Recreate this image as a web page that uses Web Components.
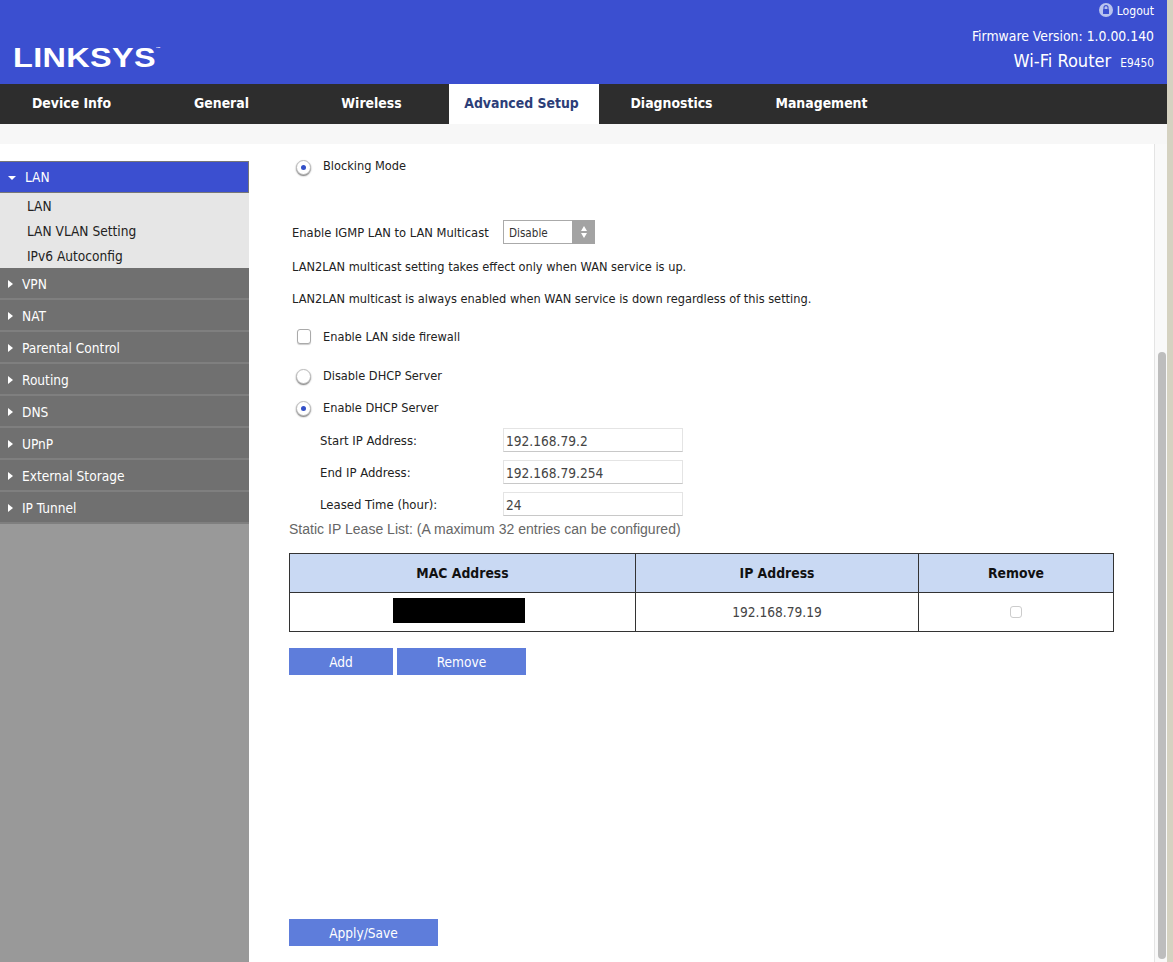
<!DOCTYPE html>
<html><head><meta charset="utf-8"><title>Linksys E9450</title>
<style>
html,body{margin:0;padding:0;height:962px;overflow:hidden;background:#fff}
body{font-family:"DejaVu Sans Condensed","DejaVu Sans",sans-serif;font-stretch:condensed;font-size:12.66px;color:#222}
</style></head><body>
<lx-app>
  <lx-header></lx-header>
  <lx-nav></lx-nav>
  <lx-body>
    <lx-sidebar></lx-sidebar>
    <lx-content></lx-content>
    <lx-scrollbar></lx-scrollbar>
  </lx-body>
</lx-app>
<script>
function def(name, html){
  customElements.define(name, class extends HTMLElement{
    constructor(){super();this.attachShadow({mode:'open'}).innerHTML=typeof html==='function'?html(this):html;}
  });
}
def('lx-app',`<style>:host{display:flex;height:962px}
 .page{width:1167px;display:flex;flex-direction:column;height:962px;overflow:hidden}
 .edge{width:6px;background:#d5d2c1}</style>
 <div class="page"><slot></slot></div><div class="edge"></div>`);

def('lx-header',`<style>:host{display:flex;justify-content:space-between;height:84px;background:#3b4fd0;color:#fff}
 .logo{align-self:flex-start;margin:44px 0 0 13px;font:700 28px/28px "Liberation Sans",sans-serif;letter-spacing:.3px;display:flex;transform:scaleX(1.158);transform-origin:0 0}
 .tm{font-size:2.5px;line-height:8px;letter-spacing:0}
 .r{display:flex;flex-direction:column;align-items:flex-end;padding:0 13px 0 0}
 .logout{height:20px;display:flex;align-items:center;gap:4px;font-size:12.1px}
 .logout span{position:relative;top:1px}
 .fw{margin-top:5px;font-size:13.85px;line-height:22px}
 .wf{margin-top:2px;font-size:18.1px;line-height:24px;display:flex;align-items:baseline;gap:9px}
 .wf small{font-size:11.8px}
 svg{display:block}</style>
 <div class="logo">LINKSYS<span class="tm">TM</span></div>
 <div class="r"><div class="logout"><svg width="14" height="14" viewBox="0 0 14 14"><circle cx="7" cy="7" r="7" fill="#b9c3ee"/><rect x="4" y="6" width="6" height="5" rx=".6" fill="#3b4fd0"/><path d="M5 6V4.6a2 2 0 0 1 4 0V6" fill="none" stroke="#3b4fd0" stroke-width="1.1"/></svg><span>Logout</span></div>
 <div class="fw">Firmware Version: 1.0.00.140</div>
 <div class="wf"><span>Wi-Fi Router</span><small>E9450</small></div></div>`);

def('lx-nav',`<style>:host{display:block;background:#2d2d2d;height:40px;margin-bottom:20px;box-shadow:0 20px 0 #f7f7f7}
 .t{display:flex;height:40px;margin-left:-1px}
 .i{width:150px;box-sizing:border-box;text-align:center;color:#fff;font-weight:700;font-size:13.9px;line-height:38px;flex:none;padding-right:5px}
 .a{background:#fff;color:#2c3e78}</style>
 <div class="t"><div class="i">Device Info</div><div class="i">General</div><div class="i">Wireless</div><div class="i a">Advanced Setup</div><div class="i">Diagnostics</div><div class="i">Management</div></div>`);

def('lx-body',`<style>:host{display:flex;flex:1;min-height:0}</style><slot></slot>`);

def('lx-menu-item',`<style>:host{display:flex;align-items:center;box-sizing:border-box;height:32px;background:#707070;color:#fff;font-size:13.6px;border-bottom:2px solid #7f7f7f;padding:2px 0 0 8px;gap:9px}
 i{width:0;height:0;border-top:4px solid transparent;border-bottom:4px solid transparent;border-left:5px solid #fff}</style><i></i><slot></slot>`);

def('lx-sidebar',`<style>:host{display:block;width:249px;background:#999;flex:none}
 .top{height:17px;background:#fff}
 .h{box-sizing:border-box;height:32px;background:#3b4fd0;color:#fff;font-size:13.6px;display:flex;align-items:center;border:1px solid #777;border-width:1px 1px 1px 0;padding-left:8px;gap:9px}
 .h i{width:0;height:0;border-left:4px solid transparent;border-right:4px solid transparent;border-top:4px solid #fff;margin-top:2px}
 .sub{background:#e6e6e6;height:75px;font-size:13.6px;color:#222}
 .sub div{height:25px;line-height:27px;padding-left:27px}
 </style>
 <div class="top"></div><div class="h"><i></i>LAN</div>
 <div class="sub"><div>LAN</div><div>LAN VLAN Setting</div><div>IPv6 Autoconfig</div></div>
 ${['VPN','NAT','Parental Control','Routing','DNS','UPnP','External Storage','IP Tunnel'].map(t=>`<lx-menu-item>${t}</lx-menu-item>`).join('')}`);

def('lx-radio',(el)=>`<style>:host{display:flex;align-items:center;height:22px;margin-left:7px;gap:12px}
 .c{width:15px;height:15px;border-radius:50%;background:#fff;border:1px solid #bdbdbd;box-shadow:0 1px 1.5px #777;box-sizing:border-box;display:flex;align-items:center;justify-content:center;position:relative;top:1px}
 .c b{width:5px;height:5px;border-radius:50%;background:#3350c8;display:${el.hasAttribute('checked')?'block':'none'}}
 .t{position:relative;top:var(--ty,0)}</style><span class="c"><b></b></span><span class="t"><slot></slot></span>`);

def('lx-field',(el)=>`<style>:host{display:flex;align-items:center;height:24px;margin-left:31px;font-size:13px}
 .l{width:183px}
 .v{box-sizing:border-box;width:180px;height:24px;border:1px solid #e4e4e4;border-bottom-color:#c8c8c8;line-height:24px;padding-left:2px;font-size:13.6px;color:#444}</style>
 <span class="l"><slot></slot></span><span class="v">${el.getAttribute('value')}</span>`);

def('lx-btn',(el)=>`<style>:host{display:block;box-sizing:border-box;height:27px;background:#5e7ddb;color:#fff;font-size:13.6px;line-height:29px;text-align:center;width:${el.getAttribute('w')}px}</style><slot></slot>`);

def('lx-select',`<style>:host{display:flex;box-sizing:border-box;width:92px;height:24px;border:1px solid #aaa;background:#fff;font-size:11.6px}
 .v{flex:1;line-height:24px;padding-left:5px;color:#333}
 .a{width:23px;background:#a3a3a3;margin:-1px -1px -1px 0;display:flex;flex-direction:column;align-items:center;justify-content:center;gap:2px}
 .a i{width:0;height:0;border-left:3.5px solid transparent;border-right:3.5px solid transparent}
 .u{border-bottom:5px solid #fff}.d{border-top:5px solid #fff}</style>
 <span class="v">Disable</span><span class="a"><i class="u"></i><i class="d"></i></span>`);

def('lx-table',`<style>:host{display:block;width:825px}
 .g{display:grid;grid-template-columns:346px 283px 1fr;border:1px solid #333;box-sizing:border-box;height:79px;grid-template-rows:39px 1fr}
 .g>div{display:flex;align-items:center;justify-content:center;box-sizing:border-box}
 .h{background:#c9d9f3;font-weight:700;font-size:13.85px;color:#111;border-bottom:1px solid #333}
 .b{border-right:1px solid #333}
 .ip{font-size:13.6px;color:#444}
 .m{width:132px;height:25px;background:#000;margin:-3px 0 0 -7px}
 .cb{width:12px;height:12px;border:1px solid #ccc;border-radius:3px;box-sizing:border-box;background:#fff}</style>
 <div class="g"><div class="h b">MAC Address</div><div class="h b">IP Address</div><div class="h">Remove</div>
 <div class="b"><span class="m"></span></div><div class="b ip">192.168.79.19</div><div><span class="cb"></span></div></div>`);

def('lx-content',`<style>:host{display:block;flex:1;min-width:0;padding-left:40px;box-sizing:border-box;background:#fff;color:#222}
 .row{display:flex;align-items:center}
 .t{margin-left:3px}
 .cbr{display:flex;align-items:center;margin-left:8px;gap:12px;height:20px}
 .cb{width:14px;height:15px;border:1px solid #aaa;border-radius:3px;box-sizing:border-box;background:#fff;box-shadow:0 1px 1px #ccc}
 .static{font:14px/20px "Liberation Sans",sans-serif;color:#666;letter-spacing:.02px}
 .btns{display:flex;gap:4px;margin-top:16px}
 </style>
 <lx-radio checked style="margin-top:11px;--ty:-1px">Blocking Mode</lx-radio>
 <div class="row t" style="margin-top:43px;height:24px"><span style="width:211px;font-size:12.8px">Enable IGMP LAN to LAN Multicast</span><lx-select></lx-select></div>
 <div class="t" style="margin-top:13px;line-height:20px">LAN2LAN multicast setting takes effect only when WAN service is up.</div>
 <div class="t" style="margin-top:12px;line-height:20px">LAN2LAN multicast is always enabled when WAN service is down regardless of this setting.</div>
 <div class="cbr" style="margin-top:17px"><span class="cb"></span><span>Enable LAN side firewall</span></div>
 <lx-radio style="margin-top:18px">Disable DHCP Server</lx-radio>
 <lx-radio checked style="margin-top:10px">Enable DHCP Server</lx-radio>
 <lx-field style="margin-top:10px" value="192.168.79.2">Start IP Address:</lx-field>
 <lx-field style="margin-top:8px" value="192.168.79.254">End IP Address:</lx-field>
 <lx-field style="margin-top:8px" value="24">Leased Time (hour):</lx-field>
 <div class="static" style="margin-top:3px">Static IP Lease List: (A maximum 32 entries can be configured)</div>
 <lx-table style="margin-top:14px"></lx-table>
 <div class="btns"><lx-btn w="104">Add</lx-btn><lx-btn w="129">Remove</lx-btn></div>
 <lx-btn w="149" style="margin-top:244px">Apply/Save</lx-btn>`);

def('lx-scrollbar',`<style>:host{display:flex;flex-direction:column;width:13px;flex:none;background:#f9f9f9;border-left:1px solid #e4e4e4;box-sizing:border-box;align-items:center}
 .s{height:208px;flex:none}.th{width:8px;flex:1;margin:0 0 3px 2px;background:#bdbdbd;border-radius:4px}</style><div class="s"></div><div class="th"></div>`);
</script>
</body></html>
